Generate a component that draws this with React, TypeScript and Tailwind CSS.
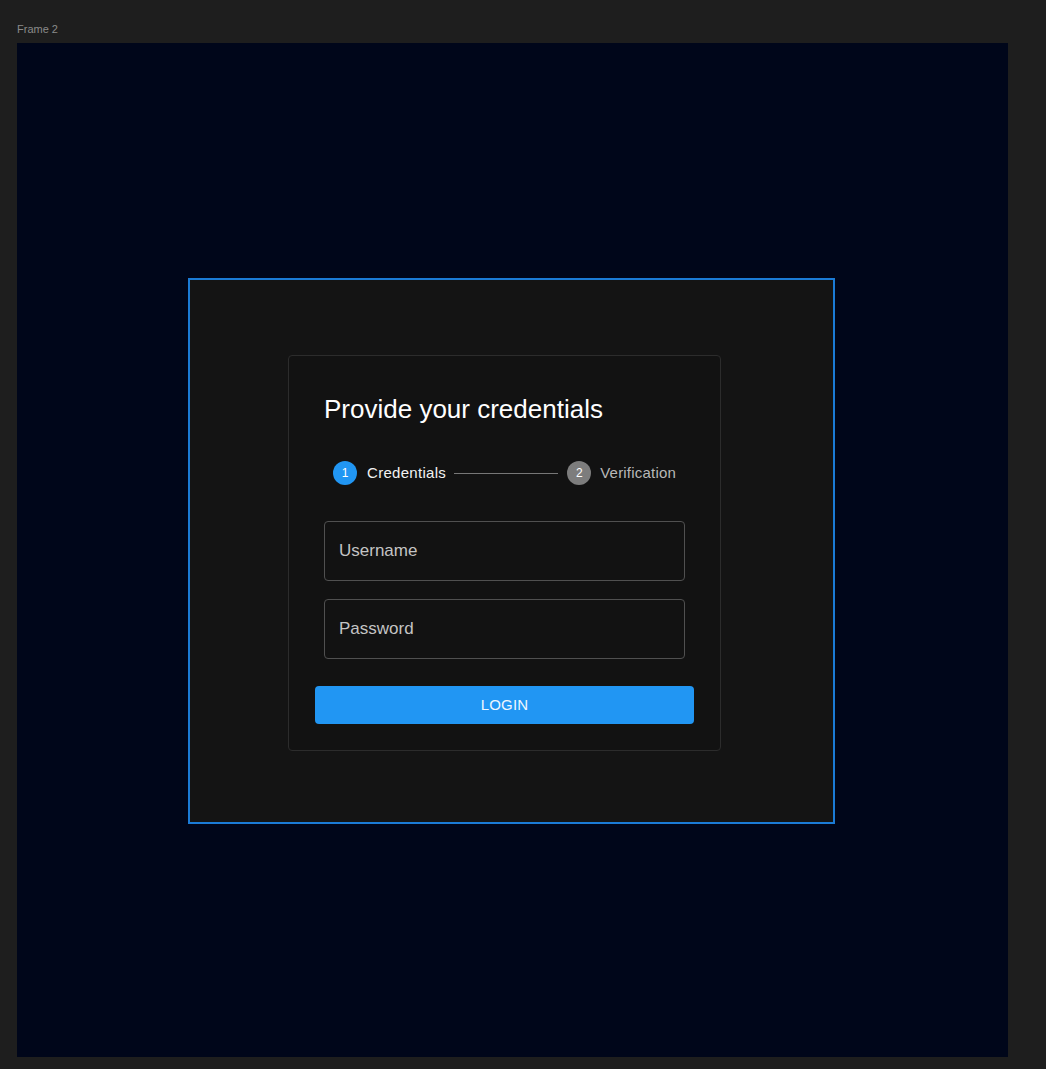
export default function App() {
  return (
    <div className="w-[1046px] h-[1069px] bg-[#1e1e1e] font-['Liberation_Sans',Arial,sans-serif] overflow-hidden">
      <div className="h-[43px] pt-[23px] pl-[17px] text-[11px] leading-[13px] text-[#8a8a8a]">Frame 2</div>

      {/* Frame */}
      <div className="ml-[17px] w-[991px] h-[1014px] bg-[#00061a] pt-[235px] pl-[171px]">
        <div className="w-[647px] h-[546px] border-2 border-[#1b7bd6] bg-[#141414] pt-[75px] pl-[98px]">
          {/* Card */}
          <div className="w-[433px] h-[396px] border border-[#2c2c2c] rounded bg-[#121212] px-[35px] pt-[37px] flex flex-col">
            <h2 className="text-[26px] leading-[32px] text-white">Provide your credentials</h2>

            {/* Stepper */}
            <div className="mt-[36px] px-[9px] h-6 flex items-center text-[15px]">
              <span className="w-6 h-6 rounded-full bg-[#2196f3] text-white text-[12px] flex items-center justify-center">1</span>
              <span className="ml-[10px] text-[#f2f2f2] tracking-[0.3px]">Credentials</span>
              <span className="flex-1 h-px bg-[#777] ml-2 mr-[9px]"></span>
              <span className="w-6 h-6 rounded-full bg-[#7d7d7d] text-white text-[12px] flex items-center justify-center">2</span>
              <span className="ml-[9px] text-[#b8b8b8] tracking-[0.2px]">Verification</span>
            </div>

            <input
              placeholder="Username"
              className="mt-[36px] h-[60px] w-full rounded-[4px] border border-[#505050] bg-transparent pl-[14px] text-[17px] text-[#e0e0e0] placeholder:text-[#c4c4c4] outline-none"
            />
            <input
              placeholder="Password"
              type="text"
              className="mt-[18px] h-[60px] w-full rounded-[4px] border border-[#505050] bg-transparent pl-[14px] text-[17px] text-[#e0e0e0] placeholder:text-[#c4c4c4] outline-none"
            />

            <button className="mt-[27px] -mx-[9px] h-[38px] rounded-[4px] bg-[#2196f3] text-[15px] text-[#eef6fe] tracking-[0.2px]">
              LOGIN
            </button>
          </div>
        </div>
      </div>
    </div>
  );
}
